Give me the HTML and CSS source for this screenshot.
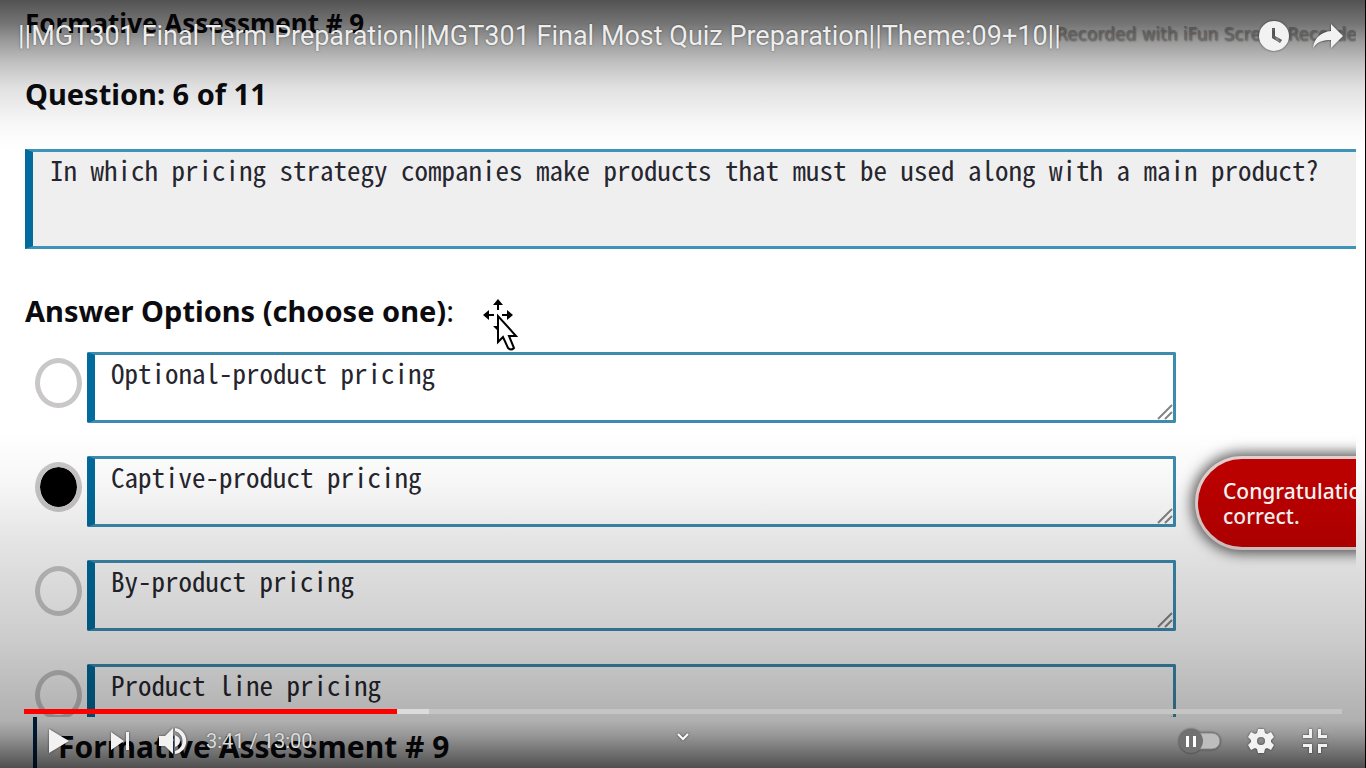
FILE: index.html
```html
<!DOCTYPE html>
<html lang="en">
<head>
<meta charset="utf-8">
<meta name="viewport" content="width=device-width, initial-scale=1">
<title>MGT301 Final Term Preparation</title>
<link rel="stylesheet" href="styles.css">
</head>
<body>
<main class="player">
  <div class="video">
    <section class="quiz">
      <div class="quiz-head">
        <h2 class="quiz-title">Formative Assessment # 9</h2>
        <span class="watermark">Recorded with iFun Screen Recorder</span>
      </div>
      <h3 class="heading">Question: 6 of 11</h3>
      <p class="question">In which pricing strategy companies make products that must be used along with a main product?</p>
      <h3 class="heading" id="options-title">Answer Options (choose one)<span class="colon">:</span></h3>
      <div class="options" role="radiogroup" aria-labelledby="options-title">
        <div class="option">
          <input class="radio" type="radio" name="answer" aria-labelledby="a1">
          <div class="field"><textarea class="answer" id="a1" aria-label="Optional-product pricing" readonly>Optional-product pricing</textarea>
            <svg class="grip" viewBox="0 0 16 16"><path d="M1 15 15 1M8 15l7-7"/></svg></div>
        </div>
        <div class="option">
          <input class="radio" type="radio" name="answer" aria-labelledby="a2" checked>
          <div class="field"><textarea class="answer" id="a2" aria-label="Captive-product pricing" readonly>Captive-product pricing</textarea>
            <svg class="grip" viewBox="0 0 16 16"><path d="M1 15 15 1M8 15l7-7"/></svg></div>
        </div>
        <div class="option">
          <input class="radio" type="radio" name="answer" aria-labelledby="a3">
          <div class="field"><textarea class="answer" id="a3" aria-label="By-product pricing" readonly>By-product pricing</textarea>
            <svg class="grip" viewBox="0 0 16 16"><path d="M1 15 15 1M8 15l7-7"/></svg></div>
        </div>
        <div class="option">
          <input class="radio" type="radio" name="answer" aria-labelledby="a4">
          <div class="field"><textarea class="answer" id="a4" aria-label="Product line pricing" readonly>Product line pricing</textarea>
            <svg class="grip" viewBox="0 0 16 16"><path d="M1 15 15 1M8 15l7-7"/></svg></div>
        </div>
      </div>
      <div class="toast" role="status">Congratulations! Your answer is<br>correct.</div>
      <svg class="cursor" viewBox="0 0 36 54">
        <path d="M16 1l5 6h-4v5h-2V7h-4zM1 17l6-5v4h5v2H7v4zM31 17l-6-5v4h-5v2h5v4zM11 28h5v5z"/>
        <path class="pointer" d="M16 18v26l5-5 5 11q3 3 6 0l-5-12h7z"/>
      </svg>
    </section>
    <section class="next-frame">
      <h2 class="next-title">Formative Assessment # 9</h2>
    </section>
  </div>
  <div class="shade shade-top"></div>
  <div class="shade shade-bottom"></div>

  <header class="top-bar">
    <h1 class="video-title">||MGT301 Final Term Preparation||MGT301 Final Most Quiz Preparation||Theme:09+10||</h1>
    <button class="icon-button" aria-label="Watch later">
      <svg width="32" height="32" viewBox="0 0 32 32"><path fill-rule="evenodd" d="M16 1a15 15 0 1 0 0 30 15 15 0 0 0 0-30zM14 8h3v8l7 4-2 3-8-5z"/></svg>
    </button>
    <button class="icon-button" aria-label="Share">
      <svg width="32" height="32" viewBox="0 0 32 32"><path d="M19 4l12 12-12 12v-8C10 20 5 22 1 28 2 18 9 12 19 11z"/></svg>
    </button>
  </header>

  <footer class="bottom-bar">
    <input class="seek" type="range" min="0" max="780" value="221" aria-label="Seek">
    <div class="controls">
      <div class="group">
        <button class="icon-button" aria-label="Play"><svg width="22" height="26" viewBox="0 0 22 26"><path d="M1 1l20 12L1 25z"/></svg></button>
        <button class="icon-button next" aria-label="Next"><svg width="20" height="20" viewBox="0 0 20 20"><path d="M1 1l13 9-13 9zM16 1h3v18h-3z"/></svg></button>
        <button class="icon-button volume" aria-label="Mute"><svg width="30" height="28" viewBox="0 0 30 28"><path d="M1 9h6l8-8v26l-8-8H1zM17 8q5 2 5 6t-5 6zM17 1c15 2 15 24 0 26v-3c10-3 10-17 0-20z"/></svg></button>
        <span class="time">3:41 / 13:00</span>
      </div>
      <button class="icon-button more" aria-label="More"><svg width="14" height="10" viewBox="0 0 14 10"><path class="line" d="M2 2l5 5 5-5"/></svg></button>
      <div class="group group-end">
        <label class="autoplay"><input type="checkbox" class="autoplay-input" aria-label="Autoplay">
          <svg width="44" height="26" viewBox="0 0 44 26"><rect class="track" x="10" y="5" width="32" height="16" rx="8"/><circle class="knob" cx="13" cy="13" r="12"/><path d="M8 8h3v11H8zM15 8h3v11h-3z"/></svg></label>
        <button class="icon-button" aria-label="Settings"><svg width="26" height="26" viewBox="0 0 26 26"><path fill-rule="evenodd" d="M10 1h6l1 4 2 1 4-2 3 5-3 3v2l3 3-3 5-4-2-2 1-1 4h-6l-1-4-2-1-4 2-3-5 3-3v-2L0 9l3-5 4 2 2-1zM13 9a4 4 0 1 0 0 8 4 4 0 0 0 0-8z"/></svg></button>
        <button class="icon-button exit" aria-label="Exit full screen"><svg width="26" height="26" viewBox="0 0 26 26"><path d="M7 1h3v9H1V7h6zM16 1h3v6h6v3h-9zM1 16h9v9H7v-6H1zM16 16h9v3h-6v6h-3z"/></svg></button>
      </div>
    </div>
  </footer>
</main>
</body>
</html>
```
FILE: styles.css
```css
* { box-sizing: border-box; }
body { margin: 0; background: #000; }
h1, h2, h3, p { margin: 0; }

.player {
  position: relative;
  height: 100vh;
  overflow: hidden;
  border-right: 1px solid #000;
  background: #fff;
  font-family: Roboto, sans-serif;
}
.video {
  display: flex;
  flex-direction: column;
  height: 100%;
  color: #0b0b10;
  font-family: "Noto Sans", sans-serif;
}
.quiz {
  position: relative;
  flex: 1;
  min-height: 0;
  margin-right: 9px;
  padding: 6px 0 0 25px;
  overflow: hidden;
}
.quiz-head {
  display: flex;
  justify-content: space-between;
  align-items: center;
  height: 34px;
}
.quiz-title { font-size: 26px; line-height: 34px; }
.watermark {
  width: 300px;
  padding-top: 22px;
  overflow: hidden;
  color: #b4b4b4;
  font: 17px/34px "DejaVu Sans", sans-serif;
  white-space: nowrap;
  text-shadow: 1px 1px 2px #777;
}
.heading { font-size: 29px; line-height: 40px; margin-top: 34px; }
.colon { font-weight: 400; }
.question {
  height: 100px;
  margin: 35px 0 42px;
  padding: 2px 17px;
  border: 3px solid #3d93b8;
  border-width: 3px 0 3px 8px;
  border-left-color: #006b9c;
  background: #f0eff0;
  color: #26262e;
  font: 27px/32px "Noto Sans Mono CJK SC", "DejaVu Sans Mono", monospace;
  white-space: nowrap;
}
.options {
  display: grid;
  gap: 33px;
  margin: 21px 180px 0 10px;
}
.question + .heading { margin-top: 0; }
.option { display: flex; gap: 5px; height: 71px; }
.radio {
  appearance: none;
  flex: none;
  width: 47px;
  height: 50px;
  margin: 6px 0 0;
  border: 5px solid #c9c7c8;
  border-radius: 50%;
}
.radio:checked { background: #000; background-clip: padding-box; }
.field { position: relative; flex: 1; display: flex; }
.answer {
  flex: 1;
  min-width: 0;
  padding: 2px 16px;
  border: 3px solid #3d8cb0;
  border-left: 8px solid #006b9c;
  border-radius: 2px;
  outline: 0;
  resize: none;
  overflow: hidden;
  background: transparent;
  color: #26262e;
  font: 27px/32px "Noto Sans Mono CJK SC", "DejaVu Sans Mono", monospace;
}
.grip {
  position: absolute;
  right: 3px;
  bottom: 3px;
  width: 16px;
  height: 16px;
  fill: none;
  stroke: #858585;
  stroke-width: 2;
}
.toast {
  position: absolute;
  top: 456px;
  left: calc(100% - 161px);
  width: 400px;
  height: 94px;
  padding: 20px 25px;
  border: 3px solid #e6d2d2;
  border-radius: 47px;
  background: #c00000;
  box-shadow: 0 0 14px 3px #555;
  color: #fff;
  font: 500 21px/25px "Noto Sans", sans-serif;
  white-space: nowrap;
}
.cursor {
  position: absolute;
  left: 482px;
  top: 298px;
  width: 36px;
  height: 54px;
}
.pointer { fill: #fff; stroke: #000; stroke-width: 2; }
.next-frame {
  flex: none;
  height: 51px;
  margin-left: 33px;
  padding-left: 21px;
  border-left: 4px solid #00264f;
}
.next-title { font-size: 30px; line-height: 60px; white-space: nowrap; }

.shade { position: absolute; left: 0; right: 0; pointer-events: none; }
.shade-top {
  top: 0;
  height: 150px;
  background: linear-gradient(rgba(0,0,0,.68), rgba(0,0,0,.54) 16%, rgba(0,0,0,.4) 27%, rgba(0,0,0,.25) 41%, rgba(0,0,0,.12) 58%, rgba(0,0,0,.03) 82%, transparent);
}
.shade-bottom {
  bottom: 0;
  height: 338px;
  background: linear-gradient(transparent, rgba(0,0,0,.03) 15%, rgba(0,0,0,.1) 32%, rgba(0,0,0,.2) 62%, rgba(0,0,0,.31) 86%, rgba(0,0,0,.4) 90%, rgba(0,0,0,.69));
}

.top-bar {
  position: absolute;
  top: 0;
  left: 0;
  right: 0;
  display: flex;
  align-items: center;
  gap: 22px;
  padding: 18px 21px 0 18px;
}
.video-title {
  flex: 1;
  color: #eee;
  font-size: 27px;
  font-weight: 400;
  line-height: 36px;
  white-space: nowrap;
  text-shadow: 0 0 2px rgba(0,0,0,.5);
}
.icon-button {
  display: flex;
  padding: 0;
  border: 0;
  background: none;
  fill: #f2f2f2;
}
.icon-button svg, .autoplay svg { filter: drop-shadow(0 0 1px rgba(0,0,0,.6)); }

.bottom-bar { position: absolute; left: 24px; right: 23px; bottom: 0; }
.seek {
  appearance: none;
  display: block;
  width: 100%;
  height: 5px;
  margin: 0;
  background: linear-gradient(90deg, #f00 28.3%, #dcdcdc 28.3% 30.7%, #c5c5c5 30.7%);
}
.seek::-webkit-slider-thumb { appearance: none; width: 0; height: 0; }
.controls {
  display: grid;
  grid-template-columns: 1fr auto 1fr;
  align-items: center;
  height: 54px;
  color: #ddd;
}
.group { display: flex; align-items: center; padding-left: 24px; }
.group-end { justify-content: flex-end; gap: 26px; padding: 0 14px 0 0; }
.next { margin-left: 40px; }
.volume { margin-left: 28px; }
.more { padding-bottom: 8px; }
.exit { margin-left: 2px; }
.time { margin-left: 18px; font-size: 20px; line-height: 26px; text-shadow: 0 0 2px rgba(0,0,0,.5); }
.line { fill: none; stroke: #fff; stroke-width: 2; }
.autoplay { position: relative; display: flex; fill: #fff; }
.autoplay-input { position: absolute; inset: 0; margin: 0; opacity: 0; }
.track { fill: #bdbdbd; stroke: #888; }
.knob { fill: #717171; }
```
